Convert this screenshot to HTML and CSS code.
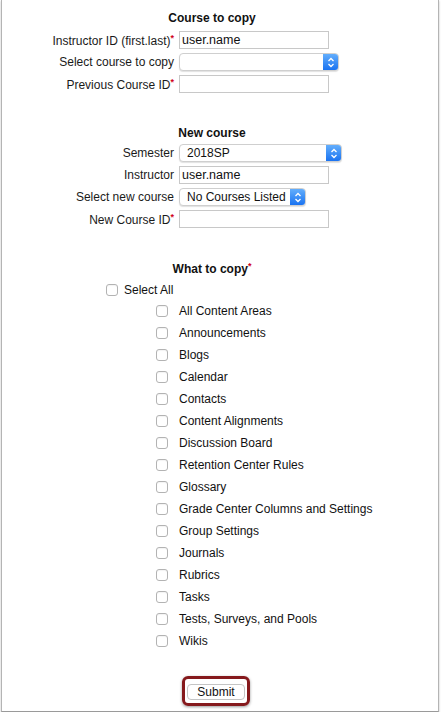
FILE: index.html
```html
<!DOCTYPE html>
<html>
<head>
<meta charset="utf-8">
<link rel="stylesheet" href="styles.css">
</head>
<body>
<div class="window">
  <form class="form">
    <h2 class="heading first">Course to copy</h2>
    <div class="fields">
      <label class="lbl">Instructor ID (first.last)<span class="req">*</span></label>
      <input class="txt" type="text" value="user.name">
      <label class="lbl">Select course to copy</label>
      <div class="sel wide"><span class="sel-text"></span><span class="sel-btn"><svg width="8" height="11" viewBox="0 0 8 11"><path d="M1.5 4 L4 1.5 L6.5 4 M1.5 7 L4 9.5 L6.5 7" fill="none" stroke="#fff" stroke-width="1.3"/></svg></span></div>
      <label class="lbl">Previous Course ID<span class="req">*</span></label>
      <input class="txt" type="text" value="">
    </div>

    <h2 class="heading second">New course</h2>
    <div class="fields">
      <label class="lbl">Semester</label>
      <div class="sel sem"><span class="sel-text">2018SP</span><span class="sel-btn"><svg width="8" height="11" viewBox="0 0 8 11"><path d="M1.5 4 L4 1.5 L6.5 4 M1.5 7 L4 9.5 L6.5 7" fill="none" stroke="#fff" stroke-width="1.3"/></svg></span></div>
      <label class="lbl">Instructor</label>
      <input class="txt" type="text" value="user.name">
      <label class="lbl">Select new course</label>
      <div class="sel narrow"><span class="sel-text">No Courses Listed</span><span class="sel-btn"><svg width="8" height="11" viewBox="0 0 8 11"><path d="M1.5 4 L4 1.5 L6.5 4 M1.5 7 L4 9.5 L6.5 7" fill="none" stroke="#fff" stroke-width="1.3"/></svg></span></div>
      <label class="lbl">New Course ID<span class="req">*</span></label>
      <input class="txt" type="text" value="">
    </div>

    <h2 class="heading third">What to copy<span class="req">*</span></h2>
    <label class="check all"><input type="checkbox" class="cb"><span>Select All</span></label>
    <div class="items">
      <label class="check"><input type="checkbox" class="cb"><span>All Content Areas</span></label>
      <label class="check"><input type="checkbox" class="cb"><span>Announcements</span></label>
      <label class="check"><input type="checkbox" class="cb"><span>Blogs</span></label>
      <label class="check"><input type="checkbox" class="cb"><span>Calendar</span></label>
      <label class="check"><input type="checkbox" class="cb"><span>Contacts</span></label>
      <label class="check"><input type="checkbox" class="cb"><span>Content Alignments</span></label>
      <label class="check"><input type="checkbox" class="cb"><span>Discussion Board</span></label>
      <label class="check"><input type="checkbox" class="cb"><span>Retention Center Rules</span></label>
      <label class="check"><input type="checkbox" class="cb"><span>Glossary</span></label>
      <label class="check"><input type="checkbox" class="cb"><span>Grade Center Columns and Settings</span></label>
      <label class="check"><input type="checkbox" class="cb"><span>Group Settings</span></label>
      <label class="check"><input type="checkbox" class="cb"><span>Journals</span></label>
      <label class="check"><input type="checkbox" class="cb"><span>Rubrics</span></label>
      <label class="check"><input type="checkbox" class="cb"><span>Tasks</span></label>
      <label class="check"><input type="checkbox" class="cb"><span>Tests, Surveys, and Pools</span></label>
      <label class="check"><input type="checkbox" class="cb"><span>Wikis</span></label>
    </div>

    <div class="submit-row">
      <div class="highlight"><button type="button" class="submit">Submit</button></div>
    </div>
  </form>
</div>
</body>
</html>
```

FILE: styles.css
```css
html, body {
  margin: 0;
  padding: 0;
  background: #ffffff;
}
body {
  font-family: "Liberation Sans", Arial, Helvetica, sans-serif;
  font-size: 12px;
  color: #111;
}
.window {
  margin-left: 1px;
  width: 438px;
  height: 712px;
  border-left: 1px solid #b4b4b4;
  border-right: 1px solid #b4b4b4;
  border-bottom: 1px solid #9a9a9a;
  box-shadow: 0 1px 2px rgba(0,0,0,0.25);
  background: #fff;
  box-sizing: border-box;
}
.form {
  width: 420px;
  margin: 0;
  padding-top: 10px;
}
.heading {
  margin: 31px 0 0 0;
  font-size: 12px;
  line-height: 16px;
  font-weight: bold;
  text-align: center;
  color: #111;
}
.heading.first {
  margin-top: 0;
}
.heading.second {
  margin-top: 32px;
}
.heading.third {
  margin-top: 30px;
}
.req {
  color: #d0021b;
  font-size: 9px;
  vertical-align: 4px;
  font-weight: bold;
}
.fields {
  display: grid;
  grid-template-columns: 172px auto;
  column-gap: 5px;
  row-gap: 4px;
  margin-top: 5px;
  align-items: center;
}
.heading.second + .fields {
  margin-top: 3px;
}
.lbl {
  justify-self: end;
  white-space: nowrap;
  color: #1a1a1a;
}
.txt {
  justify-self: start;
  box-sizing: border-box;
  width: 150px;
  height: 18px;
  margin: 0;
  padding: 0 2px;
  border: 1px solid #c8c8c8;
  border-radius: 0;
  font-family: "Liberation Sans", Arial, sans-serif;
  font-size: 12.5px;
  color: #111;
  outline: none;
}
.sel {
  justify-self: start;
  box-sizing: border-box;
  display: flex;
  align-items: stretch;
  height: 18px;
  border: 1px solid #cfcfcf;
  border-radius: 4px;
  background: #fff;
  box-shadow: 0 1px 1px rgba(0,0,0,0.12);
  overflow: hidden;
}
.sel.wide { width: 160px; }
.sel.sem { width: 163px; }
.sel.narrow { width: 127px; }
.sel-text {
  flex: 1;
  padding-left: 7px;
  line-height: 16px;
  font-size: 12px;
  color: #111;
  white-space: nowrap;
}
.sel-btn {
  width: 15px;
  display: flex;
  align-items: center;
  justify-content: center;
  background: linear-gradient(#63aefc, #1a73f1);
}
.check {
  display: flex;
  align-items: center;
  height: 22px;
  color: #111;
}
.check.all {
  margin-top: 2px;
  margin-left: 104px;
  height: 21px;
}
.check.all span {
  margin-left: 6px;
}
.items {
  margin-left: 154px;
}
.items .check span {
  margin-left: 11px;
}
.cb {
  -webkit-appearance: none;
  appearance: none;
  width: 12px;
  height: 12px;
  margin: 0;
  border: 1px solid #b3b3b3;
  border-radius: 3px;
  background: #fff;
  box-shadow: inset 0 1px 1px rgba(0,0,0,0.05);
}
.submit-row {
  display: flex;
  justify-content: center;
  margin-top: 24px;
  padding-left: 8px;
}
.highlight {
  display: flex;
  padding: 5px 2px 3px 2px;
  border: 3px solid #85191c;
  border-radius: 6px;
  box-shadow: 0 1px 3px rgba(0,0,0,0.4);
}
.submit {
  box-sizing: border-box;
  width: 58px;
  height: 16px;
  margin: 0;
  padding: 0;
  border: 1px solid #c4c4c4;
  border-radius: 4px;
  background: #fff;
  font-family: "Liberation Sans", Arial, sans-serif;
  font-size: 12px;
  line-height: 14px;
  color: #111;
}
```
